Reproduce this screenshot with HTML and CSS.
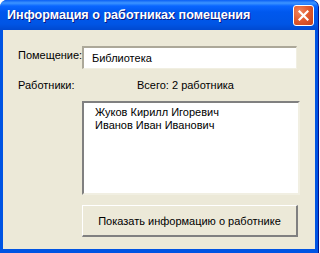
FILE: index.html
```html
<!DOCTYPE html>
<html lang="ru">
<head>
<meta charset="utf-8">
<link rel="stylesheet" href="styles.css">
</head>
<body>
<div class="window">
  <div class="titlebar">
    <span class="title">Информация о работниках помещения</span>
    <button class="close" aria-label="Закрыть">
      <svg width="11" height="11" viewBox="0 0 11 11"><path d="M1.5 1.5 L9.5 9.5 M9.5 1.5 L1.5 9.5" stroke="#fff" stroke-width="2.2" stroke-linecap="square"/></svg>
    </button>
  </div>
  <div class="client">
    <div class="row room">
      <span class="label">Помещение:</span>
      <div class="textbox">Библиотека</div>
    </div>
    <div class="row workers">
      <span class="label">Работники:</span>
      <span class="total">Всего: 2 работника</span>
    </div>
    <div class="listbox">
      <div class="item">Жуков Кирилл Игоревич</div>
      <div class="item">Иванов Иван Иванович</div>
    </div>
    <button class="btn">Показать информацию о работнике</button>
  </div>
</div>
</body>
</html>
```
FILE: styles.css
```css
html, body {
  margin: 0;
  padding: 0;
  background: #ffffff;
}
body {
  width: 320px;
  height: 253px;
  overflow: hidden;
  font-family: "Liberation Sans", Arial, sans-serif;
  font-size: 11px;
  color: #000;
}
.window {
  width: 318px;
  height: 253px;
  display: flex;
  flex-direction: column;
  border-radius: 7px 7px 0 0;
  overflow: hidden;
  background: #0054E3;
  box-shadow: 1px 0 0 #00138C;
}
.titlebar {
  height: 30px;
  flex: none;
  display: flex;
  align-items: center;
  justify-content: space-between;
  padding: 0 4px 0 7px;
  background: linear-gradient(#0A5FF5 0px, #3D95FF 3px, #0966FF 6px, #0058EE 12px, #0055E5 24px, #0049D0 30px);
}
.title {
  color: #fff;
  font-weight: bold;
  font-size: 12.6px;
  text-shadow: 1px 1px 0 #0A1883;
}
.close {
  width: 21px;
  height: 21px;
  padding: 0;
  margin: 0;
  border: 1px solid #fff;
  border-radius: 3px;
  background: radial-gradient(circle at 30% 30%, #F0865F 0%, #E35C2F 45%, #C2401D 100%);
  display: flex;
  align-items: center;
  justify-content: center;
}
.client {
  flex: 1;
  margin: 0 3px 4px 3px;
  background: #ECE9D8;
  padding: 16px 0 0 15px;
  display: flex;
  flex-direction: column;
  align-items: flex-start;
}
.row {
  display: flex;
  align-items: center;
}
.label {
  width: 64px;
  flex: none;
  color: #000;
}
.textbox {
  width: 215px;
  height: 23px;
  box-sizing: border-box;
  background: #fff;
  border-style: solid;
  border-width: 2px 1px 1px 2px;
  border-color: #ACA899 #F1EFE2 #F1EFE2 #ACA899;
  padding: 4px 0 0 8px;
}
.room .label { padding-bottom: 6px; }
.workers {
  margin-top: 9px;
  height: 14px;
}
.total {
  margin-left: 55px;
}
.listbox {
  margin: 9px 0 0 64px;
  width: 218px;
  height: 94px;
  box-sizing: border-box;
  background: #fff;
  border-style: solid;
  border-width: 2px;
  border-color: #808080 #F1EFE2 #F1EFE2 #808080;
  padding: 3px 0 0 11px;
}
.item {
  height: 13px;
  line-height: 13px;
}
.btn {
  margin: 10px 0 0 64px;
  width: 216px;
  height: 32px;
  box-sizing: border-box;
  font-family: inherit;
  font-size: 11px;
  color: #000;
  background: #ECE9D8;
  border-style: solid;
  border-width: 1px 2px 2px 1px;
  border-color: #fff #808080 #808080 #fff;
  padding: 0;
}
```
